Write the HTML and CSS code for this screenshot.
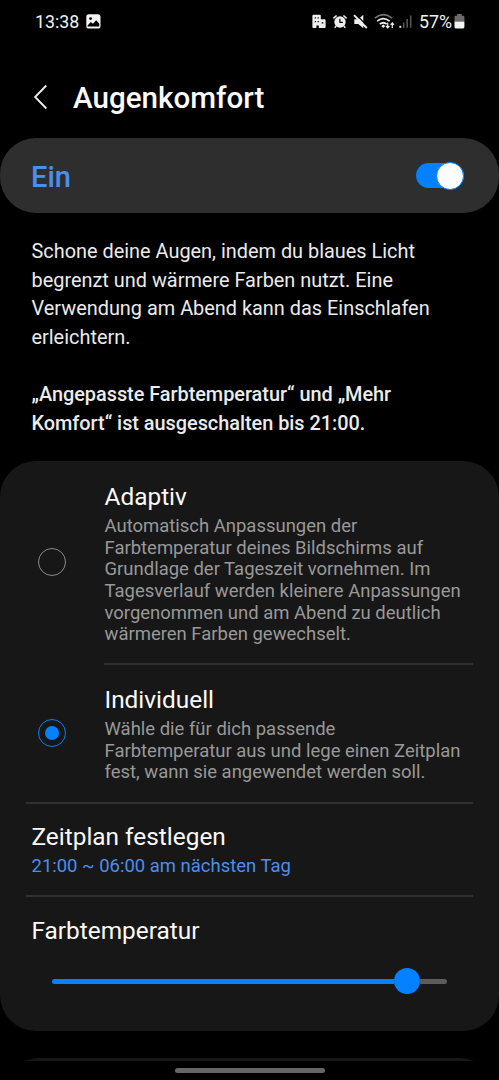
FILE: index.html
```html
<!DOCTYPE html>
<html lang="de">
<head>
    <meta charset="UTF-8">
    <meta name="viewport" content="width=device-width, initial-scale=1.0">
    <title>Augenkomfort</title>
    <link rel="stylesheet" href="styles.css">
</head>
<body>
    <div class="screen">
        <div class="status-bar">
            <div class="status-left">
                <span class="clock">13:38</span>
                <svg class="icon-image" width="15" height="15" viewBox="0 0 15 15">
                    <rect x="0.3" y="0.3" width="14.2" height="14.2" rx="2.6" fill="#f4f4f4"/>
                    <circle cx="4.6" cy="4.6" r="1.4" fill="#000"/>
                    <path d="M1.6 11.6L4.8 7.9L6.9 9.7L10.2 6.2L13.2 9.5V12.4H1.6Z" fill="#000"/>
                </svg>
            </div>
            <div class="status-right">
                <svg class="icon-group" width="102" height="18" viewBox="311 13 102 18">
                    <!-- building -->
                    <path d="M313.4 14.8h6.4q1 0 1 1v3.4h3.8q1 0 1 1v6.8q0 1-1 1h-5.8v-2.6h-2.4v2.6h-3q-1 0-1-1V15.8q0-1 1-1z" fill="#eee"/>
                    <path d="M314.8 17.3h1.2v1.3h-1.2zM317.6 17.3h1.2v1.3h-1.2zM314.8 21h1.2v1.3h-1.2zM317.6 21h1.2v1.3h-1.2zM321.7 22.3h1.7v1.2h-1.7z" fill="#000"/>
                    <!-- alarm -->
                    <circle cx="340" cy="22" r="5.7" fill="#eee"/>
                    <path d="M333.4 18.4l3.2-2.9M346.6 18.4l-3.2-2.9M336.2 26l-1.5 1.8M343.8 26l1.5 1.8" stroke="#eee" stroke-width="1.5" fill="none"/>
                    <path d="M339.9 18.8v3.5h3" stroke="#000" stroke-width="1.2" fill="none"/>
                    <!-- muted speaker -->
                    <path d="M354.3 19.2h4l5-4.4v13.4l-5-4.3h-4z" fill="#eee"/>
                    <path d="M355.4 14l12.4 12.4" stroke="#000" stroke-width="1.2"/>
                    <path d="M354 15.2l12.8 12.8" stroke="#eee" stroke-width="1.9"/>
                    <!-- wifi -->
                    <g fill="none" stroke-width="1.7">
                        <path d="M374.8 18.2q8.6-7 17.2 0" stroke="#777"/>
                        <path d="M377.2 21.2q6.2-5 12.4 0" stroke="#eee"/>
                        <path d="M379.7 24.2q3.7-2.9 7 0" stroke="#eee"/>
                    </g>
                    <path d="M381.3 25.9l2-1.3l2 1.3l-2 2z" fill="#eee"/>
                    <path d="M387.7 22.8v5M386 26l1.7 1.9l1.7-1.9M392.3 28v-5M390.6 24.9l1.7-1.9l1.7 1.9" stroke="#eee" stroke-width="1.2" fill="none"/>
                    <!-- signal -->
                    <path d="M399.3 25.8h2v2h-2z" fill="#ddd"/>
                    <path d="M402.9 22.6h1.6v5.2h-1.6zM406.4 19.1h1.6v8.7h-1.6zM409.9 15.4h1.6v12.4h-1.6z" fill="#555"/>
                </svg>
                <span class="battery-text">57%</span>
                <svg class="icon-battery" width="11" height="15" viewBox="0 0 11 15">
                    <path d="M3 0h4.8v1.7h1.6q1 0 1 1V7.5H.5V2.7q0-1 1-1H3z" fill="#6b6b6b"/>
                    <path d="M.5 7.5h9.9v5.6q0 1.3-1.3 1.3H1.8Q.5 14.4.5 13.1z" fill="#f4f4f4"/>
                </svg>
            </div>
        </div>

        <header class="header">
            <svg class="back" width="14" height="26" viewBox="0 0 14 26">
                <path d="M13.3 1.5L2.1 13L13.3 24.5" fill="none" stroke="#f0f0f0" stroke-width="1.8"/>
            </svg>
            <h1>Augenkomfort</h1>
        </header>

        <div class="main-switch">
            <span class="main-switch-label">Ein</span>
            <div class="toggle"><div class="toggle-thumb"></div></div>
        </div>

        <div class="description">
            <p>Schone deine Augen, indem du blaues Licht<br>begrenzt und wärmere Farben nutzt. Eine<br>Verwendung am Abend kann das Einschlafen<br>erleichtern.</p>
            <p class="notice">„Angepasste Farbtemperatur“ und „Mehr<br>Komfort“ ist ausgeschalten bis 21:00.</p>
        </div>

        <div class="card">
            <div class="option">
                <div class="radio"></div>
                <div class="option-text option-adaptive">
                    <h2>Adaptiv</h2>
                    <p>Automatisch Anpassungen der<br>Farbtemperatur deines Bildschirms auf<br>Grundlage der Tageszeit vornehmen. Im<br>Tagesverlauf werden kleinere Anpassungen<br>vorgenommen und am Abend zu deutlich<br>wärmeren Farben gewechselt.</p>
                </div>
            </div>
            <div class="option">
                <div class="radio checked"></div>
                <div class="option-text option-custom">
                    <h2>Individuell</h2>
                    <p>Wähle die für dich passende<br>Farbtemperatur aus und lege einen Zeitplan<br>fest, wann sie angewendet werden soll.</p>
                </div>
            </div>
            <div class="row schedule">
                <h2>Zeitplan festlegen</h2>
                <p>21:00 ~ 06:00 am nächsten Tag</p>
            </div>
            <div class="row temperature">
                <h2>Farbtemperatur</h2>
                <div class="slider">
                    <div class="slider-fill"></div>
                    <div class="slider-thumb"></div>
                    <div class="slider-rest"></div>
                </div>
            </div>
        </div>

        <div class="next-card"><div class="next-card-body"></div></div>
        <div class="nav-handle"></div>
    </div>
</body>
</html>
```

FILE: styles.css
```css
:root {
    --blue: #0381fe;
    --blue-text: #4a8fee;
    --card-bg: #171717;
    --divider: #303030;
    --text-secondary: #999999;
}

* {
    margin: 0;
    padding: 0;
    box-sizing: border-box;
}

body {
    background: #000;
    color: #fafafa;
    font-family: Roboto, sans-serif;
}

svg {
    display: block;
    flex-shrink: 0;
}

.screen {
    width: 499px;
    height: 1080px;
    overflow: hidden;
    display: flex;
    flex-direction: column;
}

.screen > * {
    flex-shrink: 0;
}

/* Status bar */
.status-bar {
    height: 43px;
    padding: 0 34px 0 35px;
    display: flex;
    align-items: center;
    justify-content: space-between;
    font-size: 17.8px;
    color: #f0f0f0;
}

.status-left,
.status-right {
    display: flex;
    align-items: center;
}

.status-left {
    gap: 7px;
}

.icon-group {
    margin-right: 6px;
}

.icon-battery {
    margin-left: 2px;
}

/* Header */
.header {
    height: 95px;
    padding: 15px 33px 0;
    display: flex;
    align-items: center;
    gap: 26px;
}

.back {
    margin-top: -3px;
}

h1 {
    font-size: 29.6px;
    font-weight: 500;
    line-height: 40px;
}

.main-switch {
    height: 75px;
    padding: 0 35px 0 31px;
    border-radius: 36px;
    background: #2e2e2e;
    display: flex;
    align-items: center;
    justify-content: space-between;
}

.main-switch-label {
    color: var(--blue-text);
    font-size: 29px;
    font-weight: 500;
    line-height: 40px;
    padding-top: 2px;
}

.toggle {
    width: 48px;
    height: 25px;
    border-radius: 13px;
    background: var(--blue);
    display: flex;
    align-items: center;
    justify-content: flex-end;
}

.toggle-thumb {
    flex-shrink: 0;
    width: 28px;
    height: 28px;
    border-radius: 50%;
    border: 1px solid var(--blue);
    background: #fcfcfc;
}

/* Description */
.description {
    height: 248px;
    padding: 25px 31px 0 31.5px;
    font-size: 19.9px;
    line-height: 28.65px;
    color: #ebebeb;
}

.notice {
    margin-top: 28.65px;
    font-weight: 500;
    letter-spacing: -0.03px;
}

/* Settings card */
.card {
    height: 570px;
    border-radius: 36px;
    background: var(--card-bg);
}

h2 {
    font-size: 24.4px;
    font-weight: 400;
    line-height: 32px;
}

.option {
    display: flex;
    align-items: center;
    padding: 0 26px 0 38px;
}

.radio {
    flex-shrink: 0;
    width: 28px;
    height: 28px;
    border: 1.5px solid #8a8a8a;
    border-radius: 50%;
    margin: -2px 38px 0 0;
    display: flex;
    align-items: center;
    justify-content: center;
}

.radio.checked {
    margin-top: 0;
    border-color: var(--blue);
}

.radio.checked::before {
    content: '';
    width: 14px;
    height: 14px;
    border-radius: 50%;
    background: var(--blue);
}

.option-text {
    flex: 1;
}

.option-text h2,
.option-text p {
    padding-left: 0.5px;
}

.option-text p,
.schedule p {
    margin-top: 3px;
    font-size: 18.48px;
    line-height: 21.66px;
    color: var(--text-secondary);
}

.option-adaptive {
    height: 204px;
    padding-top: 20px;
    border-bottom: 2px solid var(--divider);
}

.option-custom {
    height: 136.5px;
    padding-top: 19px;
}

.row {
    margin: 0 26px;
    padding: 0 5.5px;
    border-top: 2px solid var(--divider);
}

.schedule {
    height: 93.5px;
    padding-top: 17px;
}

.schedule p {
    color: var(--blue-text);
}

.temperature {
    padding-top: 18px;
}

.slider {
    height: 26px;
    margin: 21px 20.5px 0;
    display: flex;
    align-items: center;
}

.slider-fill {
    width: 342px;
    height: 5px;
    border-radius: 3px 0 0 3px;
    background: var(--blue);
}

.slider-thumb {
    width: 26px;
    height: 26px;
    border-radius: 50%;
    background: var(--blue);
}

.slider-rest {
    flex: 1;
    height: 5px;
    border-radius: 0 3px 3px 0;
    background: #5c5c5c;
}

/* Top edge of the following card */
.next-card {
    height: 3px;
    margin: 27px 0 0;
    overflow: hidden;
}

.next-card-body {
    height: 90px;
    border-radius: 40px;
    background: var(--card-bg);
}

.nav-handle {
    width: 150px;
    height: 5px;
    margin: 7px auto 0;
    border-radius: 3px;
    background: #666;
}
```
